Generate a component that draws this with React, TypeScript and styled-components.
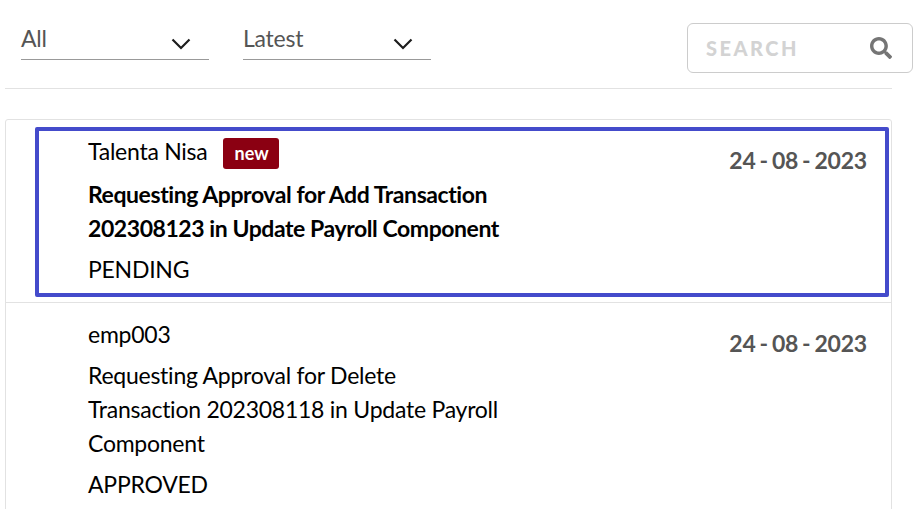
import styled, { createGlobalStyle } from 'styled-components';
import { FaSearch } from 'react-icons/fa';

const GlobalStyle = createGlobalStyle`
  html, body {
    margin: 0;
    padding: 0;
    height: 100%;
    overflow: hidden;
    background: #fff;
    font-family: Lato, "Open Sans", sans-serif;
  }
`

const Page = styled.div`
  width: 919px;
  height: 509px;
  overflow: hidden;
`

const Toolbar = styled.div`
  display: flex;
  width: 913px;
  padding: 23px 0 0 21px;
  box-sizing: border-box;
  height: 73px;
  gap: 34px;
`

const Select = styled.div`
  width: 188px;
  height: 37px;
  border-bottom: 1px solid #999;
  display: flex;
  justify-content: space-between;
  box-sizing: border-box;
  color: #555;
  font-size: 23px;
  letter-spacing: -0.25px;
  line-height: 31px;
`

const Chevron = styled.svg`
  width: 20px;
  height: 12px;
  margin: 15px 18px 0 0;
`

const SearchBox = styled.div`
  margin-left: auto;
  width: 226px;
  height: 50px;
  box-sizing: border-box;
  border: 1px solid #ccc;
  border-radius: 6px;
  display: flex;
  align-items: center;
  justify-content: space-between;
  padding: 0 20px 0 18px;
  color: #d3d3d3;
  font-size: 20px;
  font-weight: 900;
  letter-spacing: 2.5px;
  svg { color: #757575; font-size: 22px; }
`

const Divider = styled.hr`
  margin: 15px 0 0 5px;
  width: 887px;
  border: 0;
  border-top: 1px solid #e2e2e2;
`

const List = styled.div`
  margin: 30px 0 0 5px;
  width: 887px;
  box-sizing: border-box;
  border: 1px solid #e2e2e2;
  border-radius: 3px 3px 0 0;
`

const Row = styled.div`
  position: relative;
  display: flex;
  justify-content: space-between;
  padding: 13px 24px 0 82px;
  height: 183px;
  box-sizing: border-box;
  border-bottom: 1px solid #e2e2e2;
  color: #000;
  &:last-child { height: 240px; border-bottom: 0; }
`

const FocusRing = styled.div`
  position: absolute;
  left: 29px;
  top: 7px;
  width: 854px;
  height: 170px;
  box-sizing: border-box;
  border: 4px solid #444bcb;
  border-radius: 2px;
`

const Body = styled.div`
  width: 440px;
  font-size: 23px;
  letter-spacing: -0.25px;
  position: relative;
`

const Sender = styled.div`
  display: flex;
  align-items: flex-start;
  gap: 15px;
  line-height: 36px;
`

const NewBadge = styled.span`
  background: #8b0012;
  color: #fff;
  font-size: 18px;
  font-weight: 700;
  letter-spacing: 0;
  line-height: 30px;
  height: 31px;
  margin: 5px 0 2px;
  padding: 0 10px 0 12px;
  border-radius: 3px;
`

const Subject = styled.div<{ $unread?: boolean }>`
  margin-top: 6px;
  line-height: 34px;
  ${(p) => (p.$unread ? 'font-weight: 700; letter-spacing: -0.43px;' : '')}
`

const Status = styled.div`
  margin-top: 7px;
  line-height: 34px;
`

const DateText = styled.div`
  position: relative;
  margin-top: 10px;
  color: #555;
  font-size: 23px;
  font-weight: 700;
  line-height: 34px;
  letter-spacing: -0.2px;
  word-spacing: -1.45px;
`

const notifications = [
  {
    sender: 'Talenta Nisa',
    unread: true,
    subject: ['Requesting Approval for Add Transaction', '202308123 in Update Payroll Component'],
    status: 'PENDING',
    date: '24 - 08 - 2023',
  },
  {
    sender: 'emp003',
    unread: false,
    subject: ['Requesting Approval for Delete', 'Transaction 202308118 in Update Payroll', 'Component'],
    status: 'APPROVED',
    date: '24 - 08 - 2023',
  },
]

const ChevronIcon = () => (
  <Chevron viewBox="0 0 20 12" fill="none" stroke="#1d1d1d" strokeWidth="2.2">
    <path d="M1.5 1.5 L10 10 L18.5 1.5" />
  </Chevron>
)

export default function App() {
  return (
    <Page>
      <GlobalStyle />
      <Toolbar>
        <Select>All<ChevronIcon /></Select>
        <Select>Latest<ChevronIcon /></Select>
        <SearchBox>SEARCH<FaSearch /></SearchBox>
      </Toolbar>
      <Divider />
      <List>
        {notifications.map((n, i) => (
          <Row key={n.sender}>
            {i === 0 && <FocusRing />}
            <Body>
              <Sender>
                {n.sender}
                {n.unread && <NewBadge>new</NewBadge>}
              </Sender>
              <Subject $unread={n.unread}>
                {n.subject.map((line) => <div key={line}>{line}</div>)}
              </Subject>
              <Status>{n.status}</Status>
            </Body>
            <DateText>{n.date}</DateText>
          </Row>
        ))}
      </List>
    </Page>
  )
}
